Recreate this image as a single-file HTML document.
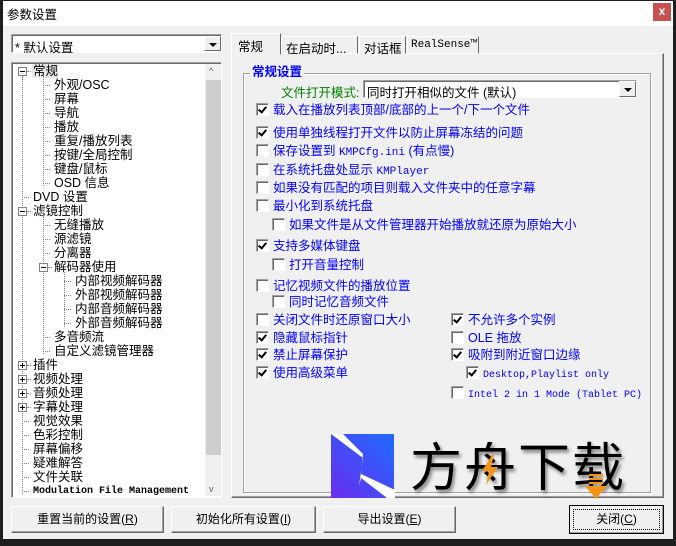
<!DOCTYPE html>
<html><head><meta charset="utf-8"><style>
*{margin:0;padding:0;box-sizing:border-box}
body{width:676px;height:546px;background:#1e1e1e;position:relative;overflow:hidden;font-family:"Liberation Sans","Noto Sans CJK SC","WenQuanYi Zen Hei",sans-serif;font-size:12px;color:#000}
.a{position:absolute;white-space:nowrap}
.win{position:absolute;left:3px;top:1px;width:670px;height:538px;background:#f0f0f0}
.title{position:absolute;left:3px;top:1px;width:670px;height:25px;background:#fff}
.sunk{border:1px solid;border-color:#a0a0a0 #fff #fff #a0a0a0;box-shadow:inset 1px 1px 0 #696969}
.btn{position:absolute;height:27px;border:1px solid;border-color:#fff #696969 #696969 #fff;box-shadow:inset -1px -1px 0 #a0a0a0;background:#f0f0f0;text-align:center;line-height:25px;font-size:12px}
.cb{position:absolute;width:13px;height:13px;background:#fff;border:1px solid;border-color:#a0a0a0 #fff #fff #a0a0a0;box-shadow:inset 1px 1px 0 #696969}
.cb.k::after{content:"";position:absolute;left:3px;top:1px;width:3px;height:6px;border:solid #000;border-width:0 2px 2px 0;transform:rotate(40deg)}
.t{position:absolute;white-space:nowrap;color:#0000ff;font-size:12.5px;line-height:14px}
.tr{position:absolute;white-space:nowrap;font-size:12.5px;line-height:14px}
.mono{font-family:"Liberation Mono","Noto Sans CJK SC",monospace;font-size:10px}
.pm{position:absolute;width:9px;height:9px;border:1px solid #808080;background:#fff}
.pm::before{content:"";position:absolute;left:1px;top:3px;width:5px;height:1px;background:#000}
.pm.p::after{content:"";position:absolute;left:3px;top:1px;width:1px;height:5px;background:#000}
.vl{position:absolute;border-left:1px dotted #808080}
.hl{position:absolute;border-top:1px dotted #808080;width:7px}
.dd{position:absolute;width:17px;background:#f0f0f0;border:1px solid;border-color:#fff #696969 #696969 #fff}
.dd::after{content:"";position:absolute;left:4px;top:6px;border:4px solid transparent;border-top:4px solid #000;border-bottom:0}
</style></head><body>
<div class="win"></div>
<div class="title"></div>
<div class="a" style="left:7px;top:4px;font-size:12.5px">参数设置</div>
<div class="a" style="left:653px;top:3px;width:18px;height:18px;background:#c75050;color:#fff;text-align:center;line-height:17px;font-weight:bold;font-size:12px">x</div>

<div class="a sunk" style="left:11px;top:34px;width:211px;height:19px;background:#fff"></div>
<div class="a" style="left:15px;top:37px;font-size:12.5px">* 默认设置</div>
<div class="dd" style="left:204px;top:36px;height:15px"></div>

<div class="a sunk" style="left:11px;top:62px;width:211px;height:436px;background:#fff"></div>
<div class="a" style="left:205px;top:64px;width:16px;height:432px;background:#f0f0f0"></div>
<div class="a" style="left:206px;top:80px;width:15px;height:375px;background:#cdcdcd"></div>
<div class="a" style="left:209px;top:66px;font-size:9px;color:#606060">^</div>
<div class="a" style="left:209px;top:484px;font-size:9px;color:#606060">v</div>
<div class="a" style="left:32px;top:64px;width:26px;height:14px;background:#e8e8e8"></div>
<div class="vl" style="left:22px;top:76px;height:418px"></div>
<div class="vl" style="left:43px;top:76px;height:110px"></div>
<div class="vl" style="left:43px;top:216px;height:138px"></div>
<div class="vl" style="left:64px;top:272px;height:55px"></div>
<div id="tree"></div>
<div class="pm" style="left:18px;top:67px"></div>
<div class="pm" style="left:18px;top:207px"></div>
<div class="pm" style="left:39px;top:263px"></div>
<div class="pm p" style="left:18px;top:361px"></div>
<div class="pm p" style="left:18px;top:375px"></div>
<div class="pm p" style="left:18px;top:389px"></div>
<div class="pm p" style="left:18px;top:403px"></div>

<div class="a" style="left:231px;top:53px;width:433px;height:445px;border:1px solid;border-color:#fff #696969 #696969 #fff;box-shadow:inset -1px -1px 0 #a0a0a0"></div>
<div class="a" style="left:281px;top:36px;width:77px;height:18px;border:1px solid;border-color:#fff #696969 transparent #fff"></div>
<div class="a" style="left:359px;top:36px;width:47px;height:18px;border:1px solid;border-color:#fff #696969 transparent #fff"></div>
<div class="a" style="left:407px;top:36px;width:72px;height:18px;border:1px solid;border-color:#fff #696969 transparent #fff"></div>
<div class="a" style="left:231px;top:33px;width:50px;height:22px;background:#f0f0f0;border:1px solid;border-color:#fff #696969 transparent #fff"></div>
<div class="a" style="left:238px;top:36px;font-size:12.5px">常规</div>
<div class="a" style="left:286px;top:38px;font-size:12.5px">在启动时...</div>
<div class="a" style="left:364px;top:38px;font-size:12.5px">对话框</div>
<div class="a mono" style="left:411px;top:39px;font-size:11px">RealSense™</div>

<div class="a" style="left:243px;top:73px;width:408px;height:420px;border:1px solid #a0a0a0;box-shadow:1px 1px 0 #fff,inset 1px 1px 0 #fff"></div>
<div class="a" style="left:250px;top:61px;padding:0 2px;background:#f0f0f0;color:#0000ff;font-weight:bold;font-size:12.5px">常规设置</div>
<div class="a" style="left:281px;top:82px;color:#008000;font-size:12.5px">文件打开模式:</div>
<div class="a sunk" style="left:363px;top:80px;width:274px;height:18px;background:#fff"></div>
<div class="a" style="left:367px;top:82px;font-size:12.5px">同时打开相似的文件 (默认)</div>
<div class="dd" style="left:619px;top:81px;height:16px"></div>
<div id="opts"></div>

<div class="btn" style="left:11px;top:506px;width:153px">重置当前的设置(<u>R</u>)</div>
<div class="btn" style="left:171px;top:506px;width:145px">初始化所有设置(<u>I</u>)</div>
<div class="btn" style="left:323px;top:506px;width:133px">导出设置(<u>E</u>)</div>
<div class="btn" style="left:569px;top:505px;width:95px;height:29px;border:1px solid #000;line-height:26px"><div style="position:absolute;left:3px;top:3px;right:3px;bottom:3px;border:1px dotted #000"></div>关闭(<u>C</u>)</div>

<svg class="a" style="left:331px;top:434px" width="64" height="65" viewBox="0 0 64 65">
<defs><linearGradient id="g" x1="0" y1="1" x2="1" y2="0"><stop offset="0" stop-color="#6a2cf0"/><stop offset="1" stop-color="#1e6cff"/></linearGradient></defs>
<rect width="63" height="64" fill="url(#g)"/>
<path d="M0 0 L12 0 L32 20 L30 40 L64 56 L64 64 L56 64 L30 44 L28 52 L32 24 Z" fill="#fff"/>
</svg>
<div class="a" style="left:410px;top:436px;font-size:52px;line-height:56px;font-family:'Noto Sans CJK SC',sans-serif;font-weight:400;letter-spacing:2px;text-shadow:2px 3px 3px rgba(0,0,0,.45)">方舟下载</div>
<svg class="a" style="left:480px;top:455px" width="20" height="30"><path d="M12 0 L2 16 L9 16 L6 30 L18 12 L11 12 L14 0Z" fill="#f39419"/></svg>
<svg class="a" style="left:585px;top:473px" width="22" height="26"><path d="M4 2h14M4 6h14M4 10h14" stroke="#f39419" stroke-width="2"/><path d="M0 13 L22 13 L11 26Z" fill="#f39419"/></svg>

<script>
var tr=[[0,"常规",1],[1,"外观/OSC"],[1,"屏幕"],[1,"导航"],[1,"播放"],[1,"重复/播放列表"],[1,"按键/全局控制"],[1,"键盘/鼠标"],[1,"OSD 信息"],[0,"DVD 设置"],[0,"滤镜控制",1],[1,"无缝播放"],[1,"源滤镜"],[1,"分离器"],[1,"解码器使用",1],[2,"内部视频解码器"],[2,"外部视频解码器"],[2,"内部音频解码器"],[2,"外部音频解码器"],[1,"多音频流"],[1,"自定义滤镜管理器"],[0,"插件",1],[0,"视频处理",1],[0,"音频处理",1],[0,"字幕处理",1],[0,"视觉效果"],[0,"色彩控制"],[0,"屏幕偏移"],[0,"疑难解答"],[0,"文件关联"],[0,"Modulation File Management"]];
var h="";tr.forEach(function(r,i){var y=64+i*14,x=33+r[0]*21;
if(!r[2])h+='<div class="hl" style="left:'+(x-11)+'px;top:'+(y+7)+'px"></div>';else h+='<div class="hl" style="left:'+(x-6)+'px;top:'+(y+7)+'px;width:4px"></div>';
var m=r[1].indexOf("Mod")==0;h+='<div class="tr'+(m?' mono':'')+'" style="left:'+x+'px;top:'+(y+(m?1:0))+'px;'+(m?'font-size:10px;font-weight:bold':'')+'">'+r[1]+'</div>';});
document.getElementById("tree").innerHTML=h;
var o=[[256,110,1,"载入在播放列表顶部/底部的上一个/下一个文件"],[256,133,1,"使用单独线程打开文件以防止屏幕冻结的问题"],[256,151,0,"保存设置到 <span class=mono style='font-size:11px'>KMPCfg.ini</span> (有点慢)"],[256,170,0,"在系统托盘处显示 <span class=mono style='font-size:11px'>KMPlayer</span>"],[256,188,0,"如果没有匹配的项目则载入文件夹中的任意字幕"],[256,206,0,"最小化到系统托盘"],[272,225,0,"如果文件是从文件管理器开始播放就还原为原始大小"],[256,246,1,"支持多媒体键盘"],[272,265,0,"打开音量控制"],[256,286,0,"记忆视频文件的播放位置"],[272,302,0,"同时记忆音频文件"],[256,320,0,"关闭文件时还原窗口大小"],[256,338,1,"隐藏鼠标指针"],[256,355,1,"禁止屏幕保护"],[256,373,1,"使用高级菜单"],[451,320,1,"不允许多个实例"],[451,338,0,"OLE 拖放"],[451,355,1,"吸附到附近窗口边缘"],[466,373,1,"<span class=mono>Desktop,Playlist only</span>"],[451,393,0,"<span class=mono>Intel 2 in 1 Mode (Tablet PC)</span>"]];
h="";o.forEach(function(r){h+='<div class="cb'+(r[2]?' k':'')+'" style="left:'+r[0]+'px;top:'+(r[1]-7)+'px"></div><div class="t" style="left:'+(r[0]+17)+'px;top:'+(r[1]-7)+'px">'+r[3]+'</div>';});
document.getElementById("opts").innerHTML=h;
</script>
</body></html>
